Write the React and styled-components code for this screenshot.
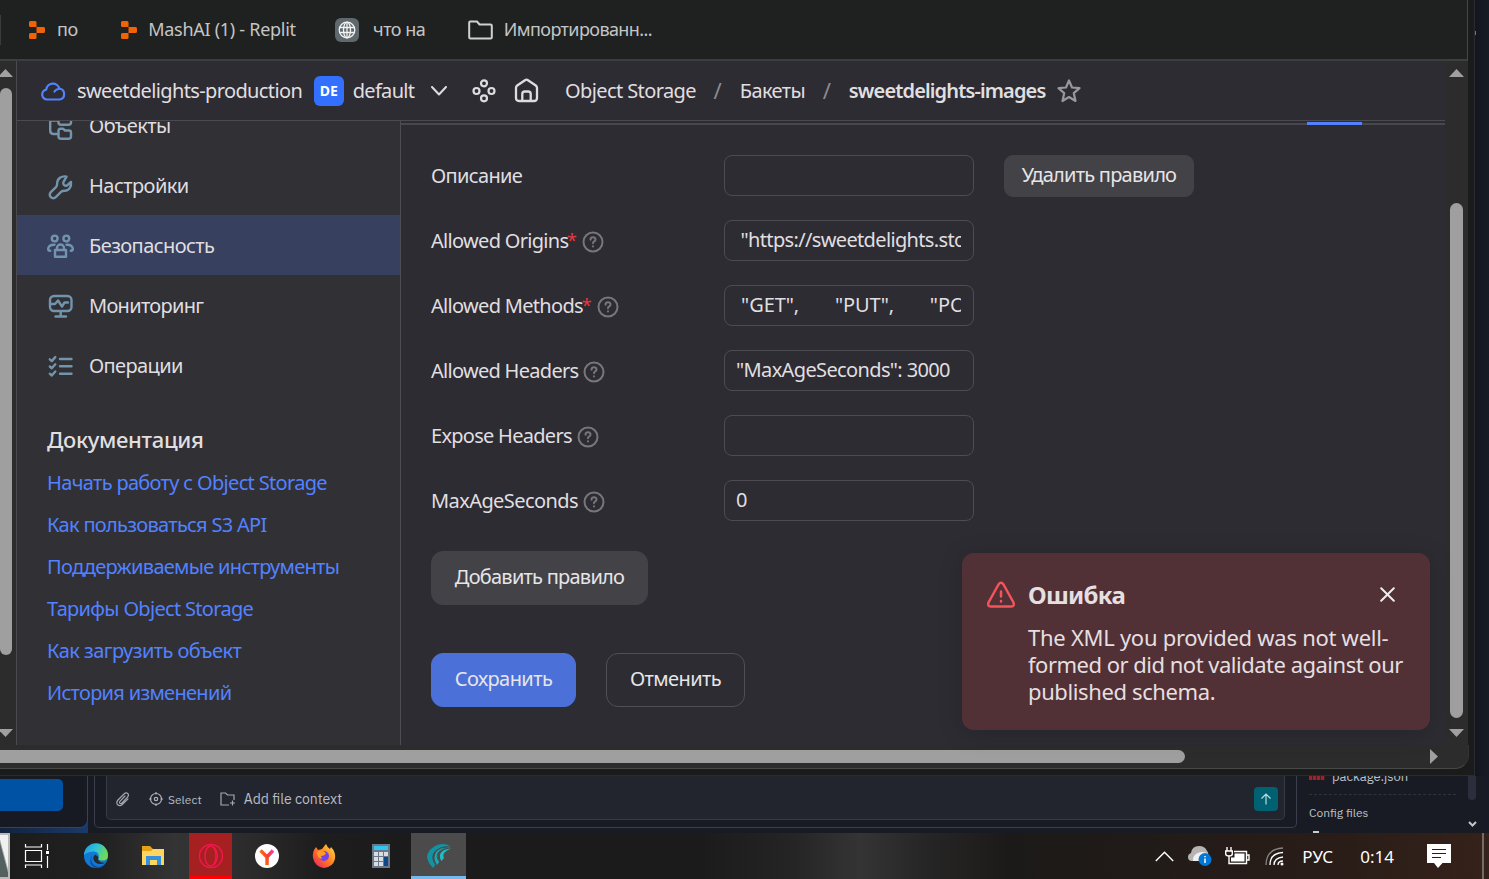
import React from "react";
import styled, { createGlobalStyle, css } from "styled-components";

const Global = createGlobalStyle`
  *{box-sizing:border-box}
  html,body{margin:0;padding:0;background:#181b24;overflow:hidden}
  button,input{font:inherit;color:inherit;margin:0}
`;
const ui = css`font-family:"Noto Sans","Open Sans",sans-serif;`;

const Screen = styled.div`
  width:1489px;height:879px;overflow:hidden;display:flex;flex-direction:column;
  background:#181b24;color:#e0dfe0;white-space:nowrap;${ui}
`;
const Desktop = styled.div`display:flex;height:776px;flex:none;`;
const Strip = styled.div`
  flex:1;display:flex;flex-direction:column;background:linear-gradient(90deg,#14161e,#181b27);
  border-left:1px solid #292b31;padding-top:31px;
`;
const StripDot = styled.div`width:1px;height:4px;background:#777;`;
const Browser = styled.div`
  width:1474px;flex:none;display:flex;flex-direction:column;
  background:#1a1c1b;border-bottom:1px solid #2a2b2c;
`;
const Bookmarks = styled.div`
  width:1468px;height:61px;flex:none;display:flex;align-items:center;background:#1f2120;
  border-bottom:2px solid #3d3e3e;border-right:1px solid #454646;
  font-family:"Noto Sans",sans-serif;font-size:18px;color:#c4c5c5;
`;
const Bookmark = styled.div`display:flex;align-items:center;gap:${p => p.$gap}px;margin-left:${p => p.$ml}px;`;
const BookmarkEdge = styled.div`width:1px;height:30px;background:#3a3b3b;`;
const Label = styled.span`
  display:block;letter-spacing:${p => p.$ls || 0}px;margin-right:${p => -(p.$ls || 0)}px;
  font-size:${p => p.$fs ? p.$fs + "px" : "inherit"};
  font-weight:${p => p.$b || "inherit"};
`;
const BookmarkText = styled(Label)`padding-bottom:1px;`;
const Globe = styled.div`
  width:24px;height:24px;border-radius:6px;background:#5f696d;display:grid;place-items:center;
`;

const Viewport = styled.div`
  width:1468px;height:684px;flex:none;display:flex;background:#2c2c2c;
`;
const Track = styled.div`
  width:${p => p.$w}px;flex:none;background:#2c2c2c;display:flex;flex-direction:column;align-items:center;
`;
const LeftTrack = styled(Track)`align-items:flex-start;border-right:1px solid #4b4b4d;`;
const Arrow = styled.svg`display:block;flex:none;fill:#a0a0a0;margin-top:${p => p.$mt || 0}px;margin-left:${p => p.$ml || 0}px;`;
const Thumb = styled.div`
  background:#9f9f9f;flex:none;width:${p => p.$w}px;height:${p => p.$h}px;margin-top:${p => p.$mt || 0}px;
  border-radius:${p => p.$r};
`;
const Page = styled.div`width:1428px;flex:none;display:flex;flex-direction:column;background:#2d2c33;position:relative;`;
const Header = styled.div`
  height:60px;flex:none;border-bottom:1px solid #4b4a50;display:flex;align-items:center;padding-left:24px;
  font-size:20px;
`;
const HeaderText = styled(Label)`padding-bottom:1px;`;
const HeaderItem = styled.div`display:flex;align-items:center;margin-left:${p => p.$ml}px;`;
const Slash = styled.div`margin-left:17px;padding-bottom:1px;font-size:22px;color:#8b8a8e;`;
const Avatar = styled.div`
  width:30px;height:30px;border-radius:6px;background:#3370ff;color:#fff;font-weight:700;font-size:14px;
  display:grid;place-items:center;margin:0 9px 0 11px;
`;
const Body = styled.div`flex:1;min-height:0;display:flex;overflow:hidden;`;
const Sidebar = styled.div`
  width:384px;flex:none;background:#313035;border-right:1px solid #4d4c52;overflow:hidden;
`;
const Nav = styled.div`margin-top:-26px;`;
const NavItem = styled.div`
  height:60px;display:flex;align-items:center;gap:14px;padding-left:29px;font-size:20px;color:#dfdee0;
  background:${p => p.$active ? "#38405f" : "transparent"};
`;
const NavIcon = styled.svg`
  width:29px;height:29px;fill:none;stroke:#7294ad;stroke-width:2.4;stroke-linecap:round;stroke-linejoin:round;
  margin-top:4px;
`;
const DocTitle = styled.div`margin:28px 0 7px 30px;height:32px;line-height:32px;font-size:22px;font-weight:500;letter-spacing:-.33px;`;
const DocLink = styled.div`margin-left:30px;height:42px;line-height:42px;font-size:20px;color:#5282ff;`;

const Main = styled.div`flex:1;display:flex;flex-direction:column;`;
const TabLine = styled.div`
  height:4px;border-bottom:2px solid #48474d;display:flex;flex:none;padding-left:906px;
`;
const TabMark = styled.div`width:55px;height:3px;margin-top:1px;background:#5282ff;flex:none;`;
const Form = styled.div`padding:30px 0 0 30px;`;
const FormRow = styled.div`height:65px;display:flex;align-items:flex-start;`;
const FieldName = styled.div`width:293px;height:42px;display:flex;align-items:center;font-size:20px;padding-bottom:2px;`;
const Star = styled.span`color:#e8373f;margin:0 5px 0 -2px;font-size:18px;line-height:20px;`;
const Help = styled.svg`
  width:22px;height:22px;fill:none;stroke:#77767b;stroke-width:2;stroke-linecap:round;margin:4px 0 0 ${p => p.$ml}px;
`;
const Field = styled.div`
  width:250px;height:41px;border:1px solid #4d4c53;border-radius:8px;padding:0 12px 0 11px;font-size:20px;
  line-height:38px;
`;
const FieldText = styled.div`overflow:hidden;white-space:pre;letter-spacing:${p => p.$ls || 0}px;`;
const Button = styled.button`
  display:grid;place-items:center;padding:0 0 3px;width:${p => p.$w}px;height:${p => p.$h || 54}px;
  border-radius:${p => p.$r || 12}px;font-size:20px;color:#e6e5e7;
  background:${p => p.$bg || "transparent"};border:1px solid ${p => p.$bg || "#504f56"};
  margin-left:${p => p.$ml || 0}px;letter-spacing:${p => p.$ls || 0}px;
`;
const Actions = styled.div`display:flex;gap:30px;margin-top:${p => p.$mt}px;`;

const Toast = styled.div`
  position:absolute;right:15px;bottom:15px;width:468px;height:177px;border-radius:12px;background:#523136;
  box-shadow:0 4px 24px rgba(0,0,0,.18);display:flex;align-items:flex-start;padding:25px 26px 0 24px;color:#e5dfe0;
`;
const ToastIcon = styled.svg`
  width:30px;height:30px;flex:none;margin-top:2px;fill:none;stroke:#f2555a;stroke-width:2.5;
  stroke-linecap:round;stroke-linejoin:round;
`;
const ToastBody = styled.div`flex:1;margin-left:12px;min-width:0;`;
const ToastHead = styled.div`
  display:flex;align-items:center;justify-content:space-between;height:33px;font-size:24px;font-weight:700;padding-right:9px;
`;
const ToastText = styled.div`margin-top:13px;font-size:22px;line-height:27px;`;

const HScroll = styled.div`
  width:1469px;height:24px;flex:none;background:#2c2c2c;border-bottom:1px solid #474848;border-right:1px solid #333;
  border-radius:0 0 14px 0;display:flex;align-items:center;
`;
const HThumb = styled.div`width:1185px;height:13px;background:#9f9f9f;border-radius:0 7px 7px 0;margin-right:245px;`;

const Editor = styled.div`
  height:57px;flex:none;display:flex;background:#181b24;font-family:"IBM Plex Sans","Inter",sans-serif;overflow:hidden;
`;
const LeftPane = styled.div`width:88px;flex:none;background:linear-gradient(90deg,#12233d,#1b3a68);`;
const LeftCard = styled.div`
  height:52px;background:#171a23;border:1px solid #0f4c91;border-width:0 1px 1px 0;border-radius:0 0 8px 0;padding-top:3px;
`;
const BlueButton = styled.div`width:63px;height:32px;background:#0052a5;border-radius:0 5px 5px 0;`;
const Chat = styled.div`
  width:1203px;height:52px;margin-left:6px;flex:none;border:1px solid #3b3e4b;border-top:0;border-radius:0 0 5px 5px;padding:0 11px;
`;
const ChatBox = styled.div`
  height:44px;border:1px solid #363946;border-top:0;border-radius:0 0 5px 5px;background:#22242e;
  display:flex;align-items:center;padding:3px 6px 0 8px;color:#b9bcc4;
`;
const Send = styled.div`
  width:24px;height:24px;border-radius:4px;background:#006172;display:grid;place-items:center;margin-left:auto;
`;
const Files = styled.div`width:160px;margin-left:12px;flex:none;color:#bfc1c7;`;
const FileRow = styled.div`
  height:19px;display:flex;align-items:flex-start;border-bottom:1px dashed #30333c;overflow:hidden;width:147px;
`;
const Npm = styled.div`width:16px;height:4px;background:repeating-linear-gradient(90deg,#9e2329 0 3px,#451a22 3px 4px);margin-right:7px;`;
const FileName = styled.div`font-size:13px;line-height:18px;margin-top:-8px;letter-spacing:0;`;
const Config = styled.div`font-size:12px;line-height:18px;margin-top:9px;`;
const ConfigTip = styled.div`width:6px;height:2px;background:#ccc;margin:9px 0 0 4px;`;
const EdScroll = styled.div`width:10px;margin-left:-2px;display:flex;flex-direction:column;align-items:center;`;
const EdThumb = styled.div`width:8px;height:24px;border-radius:0 0 4px 4px;background:#2c2f3b;margin-bottom:21px;flex:none;`;

const Taskbar = styled.div`
  height:46px;flex:none;display:flex;align-items:center;
  background:linear-gradient(90deg,#1c1c1c 0,#202020 100px,#343434 175px,#2b2b2b 250px,#1d1d1d 320px,#1b1b1b 420px,#1b1b1b 700px,#242424 790px,#343434 860px,#262525 930px,#1c1a19 1010px,#211b18 1150px,#2a1d18 1350px,#35221a 1489px);
`;
const AppTile = styled.div`
  width:${p => p.$w}px;height:46px;flex:none;display:grid;place-items:center;background:${p => p.$bg || "transparent"};
  border-bottom:${p => p.$line ? `3px solid ${p.$line}` : "0"};padding-top:${p => p.$line ? 3 : 0}px;
  padding-left:${p => p.$pl || 0}px;
`;
const Peek = styled.div`
  width:10px;height:46px;flex:none;border:2px solid #b9b9b9;border-left:0;
  background:linear-gradient(75deg,#53605f 0 45%,#f0f0ef 55%);
`;
const Tray = styled.div`
  margin-left:auto;display:flex;align-items:center;height:46px;color:#fff;font-family:"Noto Sans","Open Sans",sans-serif;
`;
const TrayItem = styled.div`display:flex;margin-right:${p => p.$mr}px;`;
const ToolGap = styled.div`width:${p => p.$w}px;flex:none;`;
const ShowDesktop = styled.div`width:7px;height:46px;border-left:2px solid #746b68;`;

function Replit() {
  return <svg width="16" height="18" viewBox="0 0 17 18" preserveAspectRatio="none" fill="#f26207">
    <path d="M1.500 0h5Q8 0 8 1.500V6H1.500Q0 6 0 4.500V1.500Q0 0 1.500 0ZM8 6h7.500Q17 6 17 7.500v3Q17 12 15.500 12H8ZM1.500 12H8v4.500Q8 18 6.500 18h-5Q0 18 0 16.500v-3Q0 12 1.500 12Z" />
  </svg>;
}

const icons = {
  objects: <><path d="M4.200 1v16.500q0 3.500 3.500 3.500h4.500M4.200 7.500h8" /><path d="M12.500 3v6.500q0 2.200 2.500 2.200h7.500q2.500 0 2.500-2.200V3" /><path d="M12.500 18q0-2.300 2-2.300h2.500l2 1.800h4q2 0 2 2v4q0 2.200-2.500 2.200h-7.500q-2.500 0-2.500-2.200Z" /></>,
  wrench: <path d="M20.500 3.600c-5-1.200-9.300 2.300-9.300 6.500 0 2-.2 3-1.200 4l-5.200 5.100a3.500 3.500 0 1 0 5 5l5.200-5.400c1-1 2-1 4-1 4 0 6.600-4 6-8.800l-4.200 3.700c-2 .6-4-1.200-3.500-3.400Z" />,
  security: <><circle cx="8.700" cy="5.500" r="2.900" /><circle cx="20.300" cy="5.500" r="2.900" /><path d="M8.500 11.800Q3 11.500 2.200 15.500q-.2 2 2 2.300M20.500 11.800q5.500-.3 6.300 3.700.2 2-2 2.300" /><path d="M9 17h11v6.700H9ZM11 16.500V15a3.500 3.500 0 0 1 7 0v1.500" /></>,
  monitor: <><rect x="4" y="3" width="21.500" height="15" rx="4" /><path d="M4.500 11h4.500l3-3.500 4 6 2.500-4h3.500M14.700 18.500v4.500M9.500 23.500h10.500" /></>,
  ops: <><path d="M14 6h11.500M14 13.300h11.500M14 20.700h11.500" /><path d="M3.800 6.300l2 1.800 3.500-4M3.800 13.500l2 1.800 3.500-4M3.800 20.700l2 1.800 3.500-4" /></>,
};
const nav = [
  ["objects", "Объекты", -.57], ["wrench", "Настройки", -.55], ["security", "Безопасность", -.58],
  ["monitor", "Мониторинг", -.7], ["ops", "Операции", -.62],
];
const docs = [
  ["Начать работу с Object Storage", -.67], ["Как пользоваться S3 API", -.7], ["Поддерживаемые инструменты", -.7],
  ["Тарифы Object Storage", -.68], ["Как загрузить объект", -.55], ["История изменений", -.7],
];
const fields = [
  { name: "Описание", ls: -.66, value: "", del: true },
  { name: "Allowed Origins", ls: -.69, req: true, help: true, value: ' "https://sweetdelights.store"', vls: -.65 },
  { name: "Allowed Methods", ls: -.69, req: true, help: true, value: ' "GET",       "PUT",       "POST"', vls: -.08 },
  { name: "Allowed Headers", ls: -.71, help: true, value: '"MaxAgeSeconds": 3000', vls: -.63 },
  { name: "Expose Headers", ls: -.72, help: true, value: "" },
  { name: "MaxAgeSeconds", ls: -.58, help: true, value: "0" },
];

export default function App() {
  return <><Global /><Screen>
    <Desktop>
      <Browser>
        <Bookmarks>
          <BookmarkEdge />
          <Bookmark $ml={28} $gap={12}><Replit /><BookmarkText $ls={-.4}>по</BookmarkText></Bookmark>
          <Bookmark $ml={43} $gap={11}><Replit /><BookmarkText $ls={-.28}>MashAI (1) - Replit</BookmarkText></Bookmark>
          <Bookmark $ml={39} $gap={14}>
            <Globe><svg width="18" height="18" viewBox="0 0 18 18" fill="none" stroke="#f2f2f2" strokeWidth="1.3"><circle cx="9" cy="9" r="7.800" /><ellipse cx="9" cy="9" rx="3.500" ry="7.800" /><path d="M1.500 6.500h15M1.500 11.500h15M9 1v16" /></svg></Globe>
            <BookmarkText $ls={-.5}>что на</BookmarkText>
          </Bookmark>
          <Bookmark $ml={42} $gap={11}>
            <svg width="25" height="20" viewBox="0 0 25 20" fill="none" stroke="#d0d0d0" strokeWidth="2" strokeLinejoin="round"><path d="M1.200 2.500Q1.200 1.500 2.200 1.500H9l2.500 3h11Q23.800 4.500 23.800 5.700v11.600Q23.800 18.500 22.500 18.500h-20Q1.200 18.500 1.200 17.300Z" /></svg>
            <BookmarkText $ls={-.6}>Импортированн...</BookmarkText>
          </Bookmark>
        </Bookmarks>
        <Viewport>
          <LeftTrack $w={17}>
            <Arrow $mt={8} $ml={-2} width="15" height="8"><path d="M7.500 0L15 8H0Z" /></Arrow>
            <Thumb $w={12} $h={567} $mt={11} $r="6px" />
            <Arrow $mt={74} $ml={-2} width="15" height="8"><path d="M0 0h15L7.500 8Z" /></Arrow>
          </LeftTrack>
          <Page>
            <Header>
              <svg width="25" height="20" viewBox="0 0 25 20" fill="none" stroke="#5282ff" strokeWidth="2.200" strokeLinecap="round" strokeLinejoin="round"><path d="M6 18.500a5 5 0 0 1-.8-9.900A6.700 6.700 0 0 1 18.300 7.500a5.600 5.600 0 0 1 .5 11ZM18 7.800q-3 .2-4.500 2.700" /></svg>
              <HeaderItem $ml={11}><HeaderText $ls={-.63}>sweetdelights-production</HeaderText></HeaderItem>
              <Avatar>DE</Avatar>
              <HeaderText $ls={-.7}>default</HeaderText>
              <HeaderItem $ml={16}><svg width="16" height="10" viewBox="0 0 16 10" fill="none" stroke="#dddcde" strokeWidth="2" strokeLinecap="round" strokeLinejoin="round"><path d="M1 1l7 7.500L15 1" /></svg></HeaderItem>
              <HeaderItem $ml={25}><svg width="24" height="24" viewBox="0 0 24 24" fill="none" stroke="#dddcde" strokeWidth="2.200"><circle cx="12" cy="4.300" r="3" /><circle cx="12" cy="19.300" r="3" /><circle cx="4.500" cy="12" r="3" /><circle cx="19.500" cy="12" r="3" /></svg></HeaderItem>
              <HeaderItem $ml={18}><svg width="25" height="25" viewBox="0 0 25 25" fill="none" stroke="#dddcde" strokeWidth="2.300" strokeLinejoin="round"><path d="M2 10q0-1.500 1.200-2.500L11 2.200q1.500-1 3 0l7.800 5.300Q23 8.500 23 10v10q0 3-3 3H5q-3 0-3-3ZM8.300 23v-7q0-2.500 2.500-2.500h3.400q2.500 0 2.500 2.500v7" /></svg></HeaderItem>
              <HeaderItem $ml={26}><HeaderText $ls={-.6}>Object Storage</HeaderText></HeaderItem>
              <Slash>/</Slash>
              <HeaderItem $ml={18}><HeaderText $ls={-.6}>Бакеты</HeaderText></HeaderItem>
              <Slash>/</Slash>
              <HeaderItem $ml={18}><HeaderText $b={600} $ls={-.86}>sweetdelights-images</HeaderText></HeaderItem>
              <HeaderItem $ml={11}><svg width="24" height="24" viewBox="0 0 24 24" fill="none" stroke="#98979b" strokeWidth="2.200" strokeLinejoin="round"><path d="M12 1.500l3 7 7.500.700-5.700 5 1.700 7.800-6.500-4-6.500 4 1.700-7.800-5.700-5 7.500-.700Z" /></svg></HeaderItem>
            </Header>
            <Body>
              <Sidebar>
                <Nav>{nav.map(([k, t, ls], i) => <NavItem key={k} $active={i === 2}><NavIcon viewBox="0 0 29 29">{icons[k]}</NavIcon><Label $ls={ls}>{t}</Label></NavItem>)}</Nav>
                <DocTitle>Документация</DocTitle>
                {docs.map(([t, ls]) => <DocLink key={t}><Label $ls={ls}>{t}</Label></DocLink>)}
              </Sidebar>
              <Main>
                <TabLine><TabMark /></TabLine>
                <Form>
                  {fields.map(f => <FormRow key={f.name}>
                    <FieldName>
                      <Label $ls={f.ls}>{f.name}</Label>{f.req && <Star>*</Star>}
                      {f.help && <Help $ml={f.req ? 0 : 4} viewBox="0 0 22 22"><circle cx="11" cy="11" r="9.500" /><path d="M8.500 8.700q.200-2.400 2.500-2.400t2.500 2.100q0 1.300-1.300 1.900T11 12.200M11 15.300v.200" /></Help>}
                    </FieldName>
                    <Field><FieldText $ls={f.vls}>{f.value}</FieldText></Field>
                    {f.del && <Button $w={190} $h={42} $r={9} $bg="#434247" $ml={30} $ls={-.76}>Удалить правило</Button>}
                  </FormRow>)}
                  <Actions $mt={6}><Button $w={217} $bg="#434247" $ls={-.75}>Добавить правило</Button></Actions>
                  <Actions $mt={48}><Button $w={145} $bg="#4b71d9" $ls={-.58}>Сохранить</Button><Button $w={139} $ls={-.6}>Отменить</Button></Actions>
                </Form>
              </Main>
            </Body>
            <Toast>
              <ToastIcon viewBox="0 0 30 30"><path d="M12.500 4.500q2.500-3.700 5 0l10 18q1.300 4-2.200 4H4.700q-3.500 0-2.200-4ZM15 11.500v5M15 21v.5" /></ToastIcon>
              <ToastBody>
                <ToastHead><Label $ls={-.7}>Ошибка</Label><svg width="15" height="15" viewBox="0 0 15 15" stroke="#f0eced" strokeWidth="2" strokeLinecap="round"><path d="M1.200 1.200l12.600 12.600M13.800 1.200L1.200 13.800" /></svg></ToastHead>
                <ToastText><Label $ls={-.27}>The XML you provided was not well-</Label><Label $ls={-.5}>formed or did not validate against our</Label><Label $ls={-.38}>published schema.</Label></ToastText>
              </ToastBody>
            </Toast>
          </Page>
          <Track $w={23}>
            <Arrow $mt={8} width="15" height="8"><path d="M7.500 0L15 8H0Z" /></Arrow>
            <Thumb $w={13} $h={515} $mt={126} $r="6.5px" />
            <Arrow $mt={11} width="15" height="8"><path d="M0 0h15L7.500 8Z" /></Arrow>
          </Track>
        </Viewport>
        <HScroll><HThumb /><Arrow width="8" height="15"><path d="M0 0L8 7.500L0 15Z" /></Arrow></HScroll>
      </Browser>
      <Strip><StripDot /></Strip>
    </Desktop>
    <Editor>
      <LeftPane><LeftCard><BlueButton /></LeftCard></LeftPane>
      <Chat><ChatBox>
        <svg width="15" height="15" viewBox="0 0 15 15" fill="none" stroke="#a5a8b0" strokeWidth="1.200" strokeLinecap="round"><path d="M10 4L5 9.300q-1 1.200 0 2 1 .7 2-.3l5.500-5.800q1.800-2.200.2-3.700-1.700-1.400-3.700.5L3 8q-2.200 2.600-.3 4.800 2.300 1.700 4.600-.3L13 6.800" /></svg>
        <ToolGap $w={19} />
        <svg width="14" height="14" viewBox="0 0 14 14" fill="none" stroke="#b0b3bb" strokeWidth="1.200"><circle cx="7" cy="7" r="5.500" /><circle cx="7" cy="7" r="1.700" /><path d="M7 0v2.500M7 11.500V14M0 7h2.500M11.500 7H14" /></svg>
        <ToolGap $w={5} /><Label $fs={12}>Select</Label><ToolGap $w={18} />
        <svg width="16" height="15" viewBox="0 0 16 15" fill="none" stroke="#a5a8b0" strokeWidth="1.200"><path d="M9 13H1V1h4.500l2 2H14v5M12.500 8.500v5M10 11h5" /></svg>
        <ToolGap $w={8} /><Label $fs={14}>Add file context</Label>
        <Send><svg width="12" height="12" viewBox="0 0 12 12" fill="none" stroke="#b8dce0" strokeWidth="1.200"><path d="M6 11.500V1M1.500 5.500L6 1l4.500 4.500" /></svg></Send>
      </ChatBox></Chat>
      <Files><FileRow><Npm /><FileName>package.json</FileName></FileRow><Config>Config files</Config><ConfigTip /></Files>
      <EdScroll><EdThumb /><svg width="9" height="6" viewBox="0 0 9 6" fill="none" stroke="#c5c5c5" strokeWidth="2"><path d="M1 1l3.500 3.500L8 1" /></svg></EdScroll>
    </Editor>
    <Taskbar>
      <Peek />
      <AppTile $w={54}>
        <svg width="26" height="26" viewBox="0 0 26 26" fill="none" stroke="#fff" strokeWidth="1.200"><path d="M1.500 1v3h16V1M1.500 7.500h16v11h-16ZM1.500 25v-3h16v3M23.500 1v6M23.500 13v12" /><rect x="22" y="8" width="3" height="3" fill="#fff" stroke="none" /></svg>
      </AppTile>
      <AppTile $w={64}>
        <svg width="26" height="26" viewBox="0 0 26 26"><defs><linearGradient id="edgeTop" x2="1" y2=".4"><stop stopColor="#2192e0" /><stop offset=".5" stopColor="#2cc0dc" /><stop offset="1" stopColor="#6bd95b" /></linearGradient></defs>
          <circle cx="13" cy="13" r="12" fill="#1378d4" /><path d="M1 12A12 12 0 0 1 25 12.500q0 5-5.500 5-5 0-4-2.500 1.500-6-5-6.500Q4.500 8.500 1 12Z" fill="url(#edgeTop)" /><path d="M9 12q-3 9 5 11.500 5 1 9.500-4Q19 26 13 25 4 22 9 12Z" fill="#0d4fa0" /><path d="M12 11.500q-3.500 4 .5 8 4 3.200 10.500 0-5 1-7.500-2-1-1 0-3.500Z" fill="#242a30" /></svg>
      </AppTile>
      <AppTile $w={50}>
        <svg width="24" height="20" viewBox="0 0 24 20"><path d="M1 0h8l3 3h11v16H1Z" fill="#e4a214" /><path d="M1 5h9l2-2h11v16H1Z" fill="#ffd460" /><path d="M5 10h15v9h-4v-5H9v5H5Z" fill="#3492dd" /></svg>
      </AppTile>
      <AppTile $w={11} />
      <AppTile $w={43} $bg="#a62022" $line="#ff0000">
        <svg width="26" height="26" viewBox="0 0 26 26" fill="none" stroke="#f0184b" strokeWidth="1.400"><circle cx="13" cy="13" r="11.500" /><ellipse cx="12.500" cy="13" rx="5.500" ry="10" /><path d="M16 4q7 9 0 18" /></svg>
      </AppTile>
      <AppTile $w={70}>
        <svg width="24" height="24" viewBox="0 0 24 24"><defs><linearGradient id="ya" gradientUnits="userSpaceOnUse" x1="4" x2="19" y1="12" y2="6"><stop stopColor="#ff8a00" /><stop offset=".5" stopColor="#fb3d28" /><stop offset="1" stopColor="#f03bd0" /></linearGradient></defs><circle cx="12" cy="12" r="12" fill="#fff" /><path d="M5.500 6.500L12 13l6-6.500M12 12v9" fill="none" stroke="url(#ya)" strokeWidth="3.500" /></svg>
      </AppTile>
      <AppTile $w={44}>
        <svg width="24" height="24" viewBox="0 0 24 24"><defs><linearGradient id="ff" x1="1" x2="0" y2="1"><stop stopColor="#ffe64a" /><stop offset=".5" stopColor="#ff7b22" /><stop offset="1" stopColor="#e81567" /></linearGradient></defs><path d="M1 14Q0 8 4 3l2 3 4-1 4-5q1 3 4 5l1-2q5 5 4 12-2 8-11 9-9-1-11-10Z" fill="url(#ff)" /><circle cx="12" cy="12" r="5" fill="#7542e5" /><path d="M5 8q5-3 9 1-1 3-5 3l1 3q-5-1-5-7Z" fill="#ff9a24" /></svg>
      </AppTile>
      <AppTile $w={65} $pl={5}>
        <svg width="18" height="24" viewBox="0 0 18 24"><rect width="18" height="24" fill="#6b7885" /><rect x="2" y="2" width="14" height="4" fill="#32c5ef" /><path d="M2 8h4v4H2ZM7 8h4v4H7ZM12 8h4v4h-4ZM2 13h4v4H2ZM7 13h4v4H7ZM2 18h4v4H2ZM7 18h4v4H7Z" fill="#d8dee3" /><path d="M12 13h4v9h-4Z" fill="#0d478c" /></svg>
      </AppTile>
      <AppTile $w={55} $bg="#4b4b4b" $line="#76b9ed">
        <svg width="26" height="26" viewBox="0 0 26 26"><path d="M25 3.500Q17-1 9 3 1 8 1 14q1 6 6 11l2.500-3.500Q4 14 9 8.500 15 2.500 25 3.500Z" fill="#1292a3" /><path d="M25 4.500Q16 3 11 8q-5 6 0 14l2.500-3.500Q10 13 13 9q4-4 12-4.500Z" fill="#18a9b8" /><path d="M25 5.500q-6 0-9.500 3.500-3.500 4 0 9l2.500-3q-1.500-3 .5-5.500Q21 7 25 5.500Z" fill="#1dbcc6" /><path d="M9.500 22Q4 14 9.500 8 14 4 22 4M13.500 19Q9 13 13 8.500 17 5.500 23 5" fill="none" stroke="#3f5153" strokeWidth=".9" /></svg>
      </AppTile>
      <Tray>
        <TrayItem $mr={14}><svg width="19" height="11" viewBox="0 0 19 11" fill="none" stroke="#fff" strokeWidth="1.400"><path d="M.8 10L9.500 1.200 18.200 10" /></svg></TrayItem>
        <TrayItem $mr={12}><svg width="25" height="22" viewBox="0 0 25 22"><path d="M4 16q-4 0-4-4 0-3 3-4Q4 1 11 1q6 0 8 5 2 1 1 8l-7 2Z" fill="#b5b4b3" /><path d="M5 16q-1-6 6-8.500 5-1.500 9 1l-6 7.500Z" fill="#f1f1f1" /><circle cx="17" cy="14.500" r="6.500" fill="#0078d7" /><path d="M17 13.500v4.500M17 11v1.300" stroke="#fff" strokeWidth="1.500" /></svg></TrayItem>
        <TrayItem $mr={15}><svg width="25" height="18" viewBox="0 0 25 18" fill="none" stroke="#fff" strokeWidth="1.400"><path d="M2 0v4M6 0v4M.700 4h6.600v3q0 2-3.300 2T.700 7ZM4 9v4M9 4.500h12.500v12H4V11M22 8h2v5h-2" /><path d="M9.500 6.500h10v8H6v-4h3.500Z" fill="#fff" stroke="none" /></svg></TrayItem>
        <TrayItem $mr={18}><svg width="19" height="19" viewBox="0 0 19 19" fill="none" stroke="#fff" strokeWidth="1.300"><path d="M1 18Q1 2 18 1" stroke="#8a8582" /><path d="M5 18Q5 6 18 5.500M9 18Q9 11 18 10" /><path d="M13 18q0-4 5-4" /><circle cx="17" cy="17" r="1.500" fill="#fff" stroke="none" /></svg></TrayItem>
        <TrayItem $mr={27}><Label $fs={17} $ls={.2}>РУС</Label></TrayItem>
        <TrayItem $mr={33}><Label $fs={17}>0:14</Label></TrayItem>
        <TrayItem $mr={31}><svg width="24" height="24" viewBox="0 0 24 24"><path d="M0 0h24v19h-8.500L11 24 7 19H0Z" fill="#fff" /><path d="M5 5.500h14M5 9.500h14M5 13.500h9" stroke="#2b1e19" strokeWidth="1.200" /></svg></TrayItem>
        <ShowDesktop />
      </Tray>
    </Taskbar>
  </Screen></>;
}
